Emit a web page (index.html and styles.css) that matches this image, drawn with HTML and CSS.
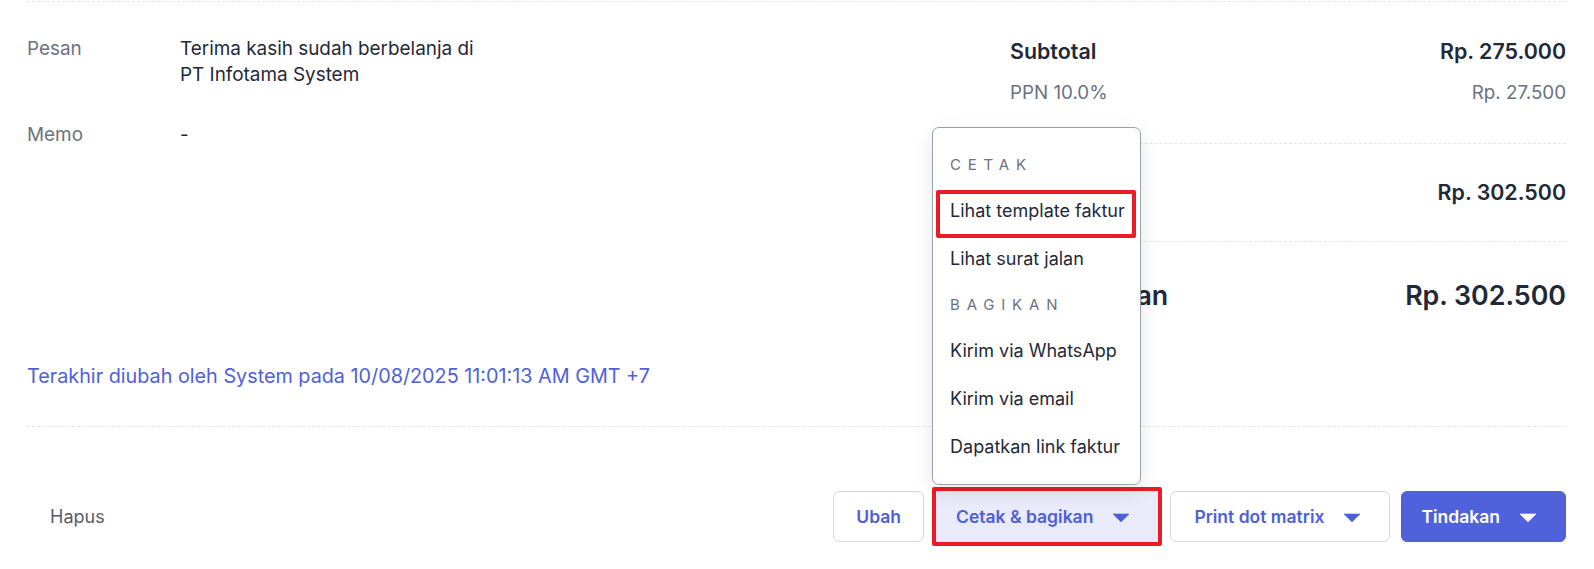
FILE: index.html
```html
<!DOCTYPE html>
<html lang="id">
<head>
<meta charset="utf-8">
<title>Faktur</title>
<link rel="stylesheet" href="styles.css">
</head>
<body>
<div class="page">
  <div class="top-section">
    <div class="notes">
      <div class="note-row">
        <div class="note-label">Pesan</div>
        <div class="note-value">Terima kasih sudah berbelanja di<br>PT Infotama System</div>
      </div>
      <div class="note-row">
        <div class="note-label">Memo</div>
        <div class="note-value">-</div>
      </div>
    </div>
    <div class="summary">
      <div class="sum-group group-first">
        <div class="sum-row sum-strong"><span>Subtotal</span><span>Rp. 275.000</span></div>
        <div class="sum-row sum-muted"><span>PPN 10.0%</span><span>Rp. 27.500</span></div>
      </div>
      <div class="sum-group group-mid">
        <div class="sum-row sum-strong"><span>Total</span><span>Rp. 302.500</span></div>
      </div>
      <div class="sum-group group-last">
        <div class="sum-row sum-big"><span>Sisa tagihan</span><span>Rp. 302.500</span></div>
      </div>
    </div>
  </div>

  <div class="audit">Terakhir diubah oleh System pada 10/08/2025 11:01:13 AM GMT +7</div>

  <div class="footer">
    <button class="btn-text">Hapus</button>
    <div class="actions">
      <button class="btn btn-outline btn-plain">Ubah</button>
      <div class="dropdown">
        <div class="menu">
          <div class="menu-header">CETAK</div>
          <div class="menu-item menu-item-marked">Lihat template faktur</div>
          <div class="menu-item">Lihat surat jalan</div>
          <div class="menu-header">BAGIKAN</div>
          <div class="menu-item">Kirim via WhatsApp</div>
          <div class="menu-item">Kirim via email</div>
          <div class="menu-item">Dapatkan link faktur</div>
        </div>
        <button class="btn btn-soft btn-marked">Cetak &amp; bagikan
          <svg class="caret" viewBox="0 0 24 24" width="24" height="24"><path d="M4 9h16l-8 8z" fill="currentColor" stroke="currentColor" stroke-width="0.6" stroke-linejoin="round"/></svg>
        </button>
      </div>
      <button class="btn btn-outline">Print dot matrix
        <svg class="caret" viewBox="0 0 24 24" width="24" height="24"><path d="M4 9h16l-8 8z" fill="currentColor" stroke="currentColor" stroke-width="0.6" stroke-linejoin="round"/></svg>
      </button>
      <button class="btn btn-primary">Tindakan
        <svg class="caret" viewBox="0 0 24 24" width="24" height="24"><path d="M4 9h16l-8 8z" fill="currentColor" stroke="currentColor" stroke-width="0.6" stroke-linejoin="round"/></svg>
      </button>
    </div>
  </div>
</div>
</body>
</html>
```
FILE: styles.css
```css
* { box-sizing: border-box; }

html, body {
  margin: 0;
  padding: 0;
  background: #ffffff;
}

body {
  font-family: Inter, "Noto Sans", "Liberation Sans", sans-serif;
  font-size: 18px;
  color: #1f2937;
}

.page {
  padding: 1px 28px 0 27px;
  min-height: 569px;
}

.top-section {
  border-top: 1px dashed #e3e5ea;
  display: grid;
  grid-template-columns: 1fr 556px;
}

/* notes */
.notes {
  padding-top: 34px;
  display: flex;
  flex-direction: column;
  gap: 34px;
  font-size: 18.9px;
}

.note-row {
  display: flex;
  line-height: 26px;
}

.note-label {
  width: 153px;
  color: #6b7280;
}

.note-value {
  color: #1f2937;
}

/* summary */
.sum-group {
  border-bottom: 1px dashed #e3e5ea;
}

.group-first {
  padding: 35px 0 37px;
}

.group-mid {
  padding: 34px 0 35px;
}

.group-last {
  padding-top: 35px;
  border-bottom: none;
}

.sum-row {
  display: flex;
  justify-content: space-between;
}

.sum-strong {
  font-size: 21.4px;
  font-weight: 600;
  line-height: 28px;
  color: #1f2937;
}

.sum-muted {
  margin-top: 15px;
  font-size: 18.8px;
  line-height: 26px;
  color: #6b7280;
}

.sum-big {
  font-size: 26.8px;
  font-weight: 600;
  line-height: 36px;
  color: #1f2937;
}

/* audit */
.audit {
  margin-top: 50px;
  padding-bottom: 37px;
  border-bottom: 1px dashed #e3e5ea;
  font-size: 19.8px;
  line-height: 26px;
  color: #4f5fd9;
}

/* footer */
.footer {
  padding-top: 64px;
  display: flex;
  justify-content: space-between;
  align-items: center;
}

.btn-text {
  font: inherit;
  height: 51px;
  padding: 0 23px;
  border: none;
  background: none;
  color: #555c69;
}

.actions {
  display: flex;
  gap: 11px;
  align-items: center;
}

.btn {
  font: inherit;
  font-size: 17.5px;
  font-weight: 600;
  height: 51px;
  border-radius: 6px;
  display: flex;
  align-items: center;
  gap: 16px;
  padding: 0 25px 0 23px;
  cursor: pointer;
}

.btn-outline {
  background: #ffffff;
  border: 1px solid #d5d8de;
  color: #4f5fd9;
}

.btn-plain {
  padding: 0 22px;
  margin-right: -3px;
}

.dropdown {
  position: relative;
  margin-right: -3px;
}

.btn-soft {
  position: relative;
  background: #e9eafa;
  border: 1px solid #e3e5f6;
  color: #4f5fd9;
  padding: 0 28px 0 23px;
  border-radius: 4px;
}

.btn-primary {
  background: #4f62dc;
  border: 1px solid #4f62dc;
  color: #ffffff;
  padding: 0 25px 0 19px;
}

.btn-marked::after {
  content: "";
  position: absolute;
  left: -1px;
  right: -1px;
  top: -5px;
  bottom: -5px;
  border: 4px solid #ea1c26;
  border-radius: 2px;
  pointer-events: none;
}

.caret {
  display: block;
  flex: none;
}

/* dropdown menu */
.menu {
  position: absolute;
  left: 0;
  bottom: calc(100% + 6px);
  width: 209px;
  background: #ffffff;
  border: 1px solid #9aa1ad;
  border-radius: 7px;
  box-shadow: 0 6px 20px rgba(17, 24, 39, 0.10);
  padding: 15px 0 13px;
  z-index: 5;
}

.menu-header {
  height: 44px;
  line-height: 44px;
  padding-left: 17px;
  font-size: 15px;
  letter-spacing: 6.8px;
  color: #6b7280;
}

.menu-item {
  position: relative;
  height: 48px;
  line-height: 48px;
  padding-left: 17px;
  color: #1f2937;
  white-space: nowrap;
}

.menu-item-marked::after {
  content: "";
  position: absolute;
  left: 3px;
  right: 4px;
  top: 3px;
  bottom: -3px;
  border: 4px solid #ea1c26;
  border-radius: 2px;
}
```
